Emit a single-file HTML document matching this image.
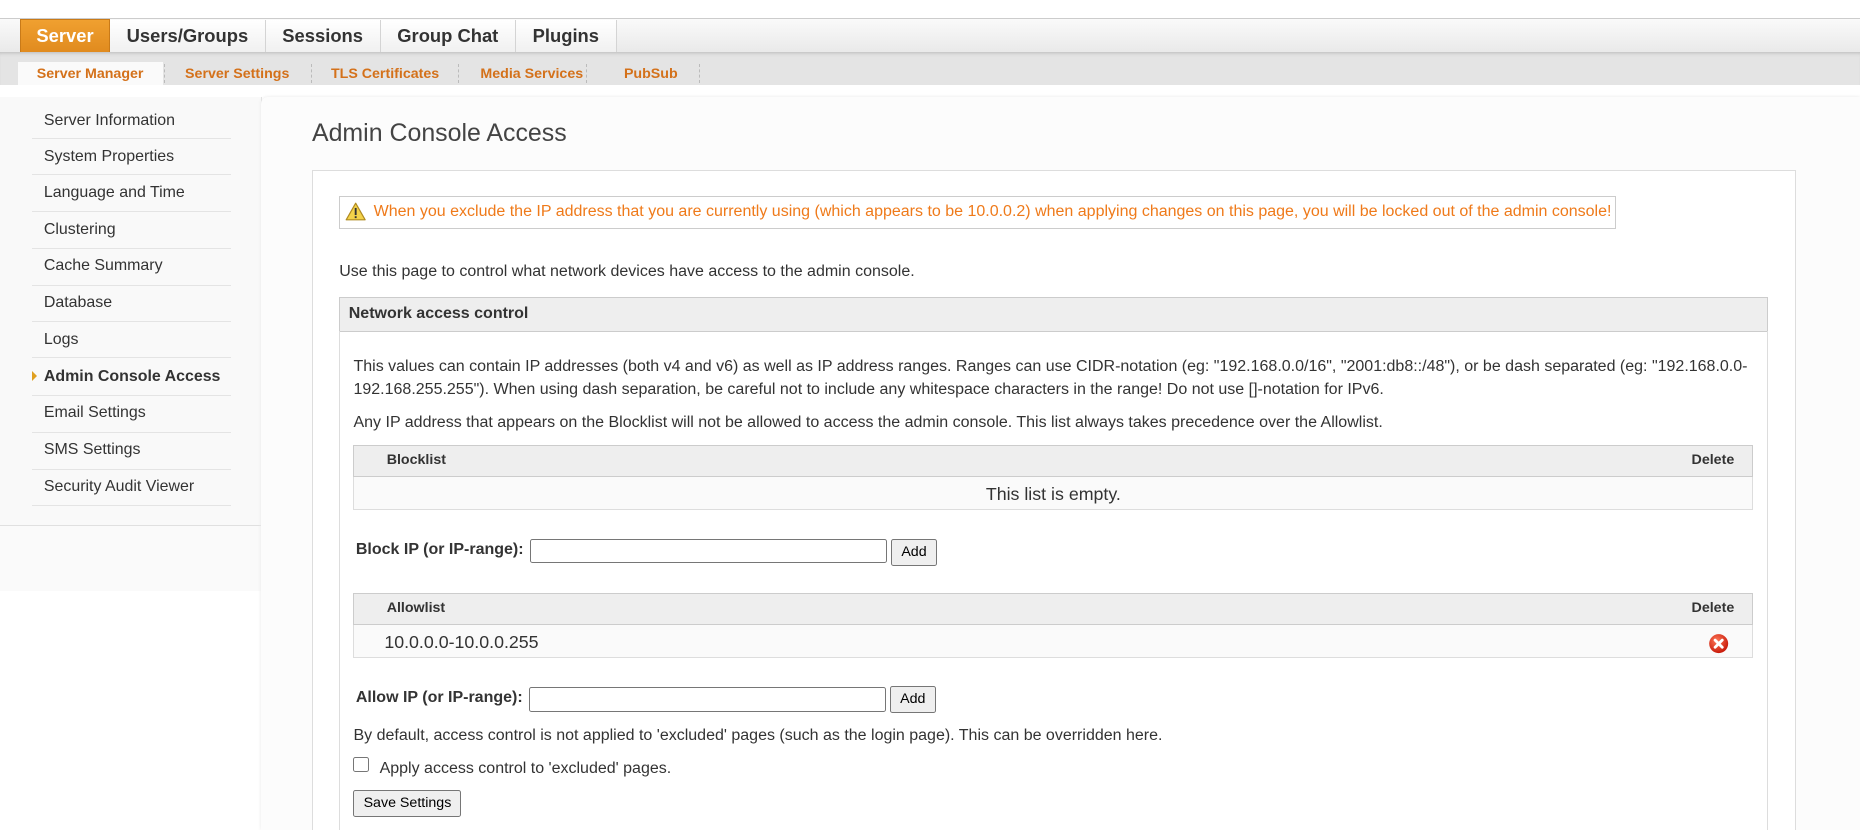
<!DOCTYPE html>
<html><head><meta charset="utf-8"><style>
html,body{margin:0;padding:0;overflow:hidden;}
#wrap{width:1568px;height:700px;overflow:hidden;zoom:1.18622;font-family:"Liberation Sans",Arial,sans-serif;background:#fff;color:#333;position:relative;}
.abs{position:absolute;}
#tabs{left:0;top:15px;width:1568px;height:29px;border-top:1px solid #ccc;background:linear-gradient(#fafafa,#e9e9e9);}
.tab{position:absolute;top:1px;height:28px;line-height:27px;font-weight:bold;font-size:15.5px;color:#333;text-align:center;border-right:1px solid #d4d4d4;background:linear-gradient(#fff,#f0f0f0);}
.tab.on{background:linear-gradient(#f0a030,#e08a1e);color:#fff;border:1px solid #c97a18;}
#sub{left:0;top:44px;width:1568px;height:28px;background:#e4e4e4;box-shadow:inset 0 3px 3px -2px #bbb;}
.st{position:absolute;top:10px;font-size:12px;font-weight:bold;color:#d4711a;}
.sep{position:absolute;top:10px;height:16px;border-left:1px dashed #bbb;}
#side{left:0;top:82px;width:220px;height:361px;background:#f9f9f9;border-right:1px solid #e0e0e0;border-bottom:1px solid #e0e0e0;}
.si{position:absolute;left:37px;font-size:13.45px;color:#333;}
.sl{position:absolute;left:27px;width:168px;border-top:1px solid #e4e4e4;}
input[type=text]{position:absolute;height:21px;border:1px solid #767676;border-radius:2px;box-sizing:border-box;margin:0;}
.btn{position:absolute;height:23px;box-sizing:border-box;border:1px solid #767676;border-radius:2px;background:#efefef;font-size:12px;line-height:21px;text-align:center;color:#000;}
.t{position:absolute;font-size:13.5px;color:#333;white-space:nowrap;}
.th{position:absolute;height:27px;background:#eee;border:1px solid #ccc;box-sizing:border-box;}
.tr{position:absolute;height:28px;background:#fafafa;border:1px solid #ddd;border-top:none;box-sizing:border-box;}
</style></head><body><div id="wrap">
<div id="tabs" class="abs">
 <div class="tab on" style="left:17px;width:74px;top:0;">Server</div>
 <div class="tab" style="left:93px;width:130px;">Users/Groups</div>
 <div class="tab" style="left:224px;width:96px;">Sessions</div>
 <div class="tab" style="left:321px;width:113px;">Group Chat</div>
 <div class="tab" style="left:435px;width:84px;">Plugins</div>
</div>
<div id="sub" class="abs">
 <div class="abs" style="left:15px;top:8px;width:122px;height:20px;background:#fafafa;"></div>
 <div class="st" style="left:31px;top:12px;">Server Manager</div>
 <div class="sep" style="left:138px;"></div>
 <div class="st" style="left:156px;top:12px;">Server Settings</div>
 <div class="sep" style="left:262px;"></div>
 <div class="st" style="left:279px;top:12px;">TLS Certificates</div>
 <div class="sep" style="left:386px;"></div>
 <div class="st" style="left:405px;top:12px;">Media Services</div>
 <div class="sep" style="left:494px;"></div>
 <div class="st" style="left:526px;top:12px;">PubSub</div>
 <div class="sep" style="left:589px;"></div>
</div>
<div class="abs" style="left:0;top:443px;width:226px;height:55px;background:#fafafa;"></div>
<div id="side" class="abs">
 <div class="si" style="top:12px">Server Information</div><div class="sl" style="top:34px"></div>
 <div class="si" style="top:43px">System Properties</div><div class="sl" style="top:65px"></div>
 <div class="si" style="top:73px">Language and Time</div><div class="sl" style="top:96px"></div>
 <div class="si" style="top:104px">Clustering</div><div class="sl" style="top:127px"></div>
 <div class="si" style="top:135px">Cache Summary</div><div class="sl" style="top:158px"></div>
 <div class="si" style="top:166px">Database</div><div class="sl" style="top:189px"></div>
 <div class="si" style="top:197px">Logs</div><div class="sl" style="top:219px"></div>
 <div class="abs" style="left:27px;top:231px;width:0;height:0;border-left:5px solid #e0a020;border-top:5px solid transparent;border-bottom:5px solid transparent;"></div>
 <div class="si" style="top:228px;font-weight:bold;">Admin Console Access</div><div class="sl" style="top:251px"></div>
 <div class="si" style="top:259px">Email Settings</div><div class="sl" style="top:282px"></div>
 <div class="si" style="top:290px">SMS Settings</div><div class="sl" style="top:313px"></div>
 <div class="si" style="top:321px">Security Audit Viewer</div><div class="sl" style="top:344px"></div>
</div>
<div class="abs" style="left:220px;top:82px;width:1348px;height:618px;background:#fcfcfc;border-radius:6px 0 0 0;box-shadow:0 0 3px #e8e8e8;"></div>
<div class="abs" style="left:263px;top:100px;font-size:21px;color:#444;">Admin Console Access</div>
<div class="abs" style="left:263px;top:143px;width:1249px;height:556px;background:#fff;border:1px solid #ddd;border-bottom:none;"></div>
<div class="abs" style="left:286px;top:165px;width:1075px;height:26px;border:1px solid #ccc;background:#fff;"></div>
<svg class="abs" style="left:291px;top:170px" width="18" height="16" viewBox="0 0 18 16"><path d="M9 1 L17 15 L1 15 Z" fill="#f3d24a" stroke="#b08a20" stroke-width="1" stroke-linejoin="round"/><rect x="8.2" y="5" width="1.6" height="6" fill="#333"/><rect x="8.2" y="12" width="1.6" height="1.6" fill="#333"/></svg>
<div class="t" style="left:315px;top:171px;color:#ef7a1a;">When you exclude the IP address that you are currently using (which appears to be 10.0.0.2) when applying changes on this page, you will be locked out of the admin console!</div>
<div class="t" style="left:286px;top:222px;">Use this page to control what network devices have access to the admin console.</div>
<div class="abs" style="left:286px;top:250px;width:1203px;height:28px;background:#eee;border:1px solid #ccc;"></div>
<div class="abs" style="left:286px;top:279px;width:1203px;height:421px;border:1px solid #ddd;border-top:none;border-bottom:none;"></div>
<div class="t" style="left:294px;top:257px;font-weight:bold;">Network access control</div>
<div class="t" style="left:298px;top:302px;">This values can contain IP addresses (both v4 and v6) as well as IP address ranges. Ranges can use CIDR-notation (eg: "192.168.0.0/16", "2001:db8::/48"), or be dash separated (eg: "192.168.0.0-</div>
<div class="t" style="left:298px;top:321px;">192.168.255.255"). When using dash separation, be careful not to include any whitespace characters in the range! Do not use []-notation for IPv6.</div>
<div class="t" style="left:298px;top:349px;">Any IP address that appears on the Blocklist will not be allowed to access the admin console. This list always takes precedence over the Allowlist.</div>
<div class="th" style="left:298px;top:375px;width:1180px;"></div>
<div class="t" style="left:326px;top:381px;font-size:12px;font-weight:bold;">Blocklist</div>
<div class="t" style="left:1426px;top:381px;font-size:12px;font-weight:bold;">Delete</div>
<div class="tr" style="left:298px;top:402px;width:1180px;"></div>
<div class="t" style="left:298px;width:1180px;text-align:center;top:408px;font-size:15px;">This list is empty.</div>
<div class="t" style="left:300px;top:456px;font-weight:bold;">Block IP (or IP-range):</div>
<input type="text" style="left:447px;top:454px;width:301px;">
<div class="btn" style="left:751px;top:454px;width:39px;">Add</div>
<div class="th" style="left:298px;top:500px;width:1180px;"></div>
<div class="t" style="left:326px;top:506px;font-size:12px;font-weight:bold;">Allowlist</div>
<div class="t" style="left:1426px;top:506px;font-size:12px;font-weight:bold;">Delete</div>
<div class="tr" style="left:298px;top:527px;width:1180px;"></div>
<div class="t" style="left:324px;top:533px;font-size:15px;">10.0.0.0-10.0.0.255</div>
<svg class="abs" style="left:1440px;top:534px" width="18" height="18" viewBox="0 0 18 18"><defs><radialGradient id="g" cx="40%" cy="35%" r="65%"><stop offset="0" stop-color="#ff7a5a"/><stop offset="1" stop-color="#c81a0a"/></radialGradient></defs><circle cx="9" cy="9" r="8" fill="url(#g)"/><path d="M6 6 L12 12 M12 6 L6 12" stroke="#fff" stroke-width="2.4" stroke-linecap="round"/></svg>
<div class="t" style="left:300px;top:581px;font-weight:bold;">Allow IP (or IP-range):</div>
<input type="text" style="left:446px;top:579px;width:301px;">
<div class="btn" style="left:750px;top:578px;width:39px;">Add</div>
<div class="t" style="left:298px;top:613px;">By default, access control is not applied to 'excluded' pages (such as the login page). This can be overridden here.</div>
<div class="abs" style="left:298px;top:638px;width:13px;height:13px;border:1px solid #767676;border-radius:2px;box-sizing:border-box;background:#fff;"></div>
<div class="t" style="left:320px;top:641px;">Apply access control to 'excluded' pages.</div>
<div class="btn" style="left:298px;top:666px;width:91px;">Save Settings</div>
</div></body></html>
